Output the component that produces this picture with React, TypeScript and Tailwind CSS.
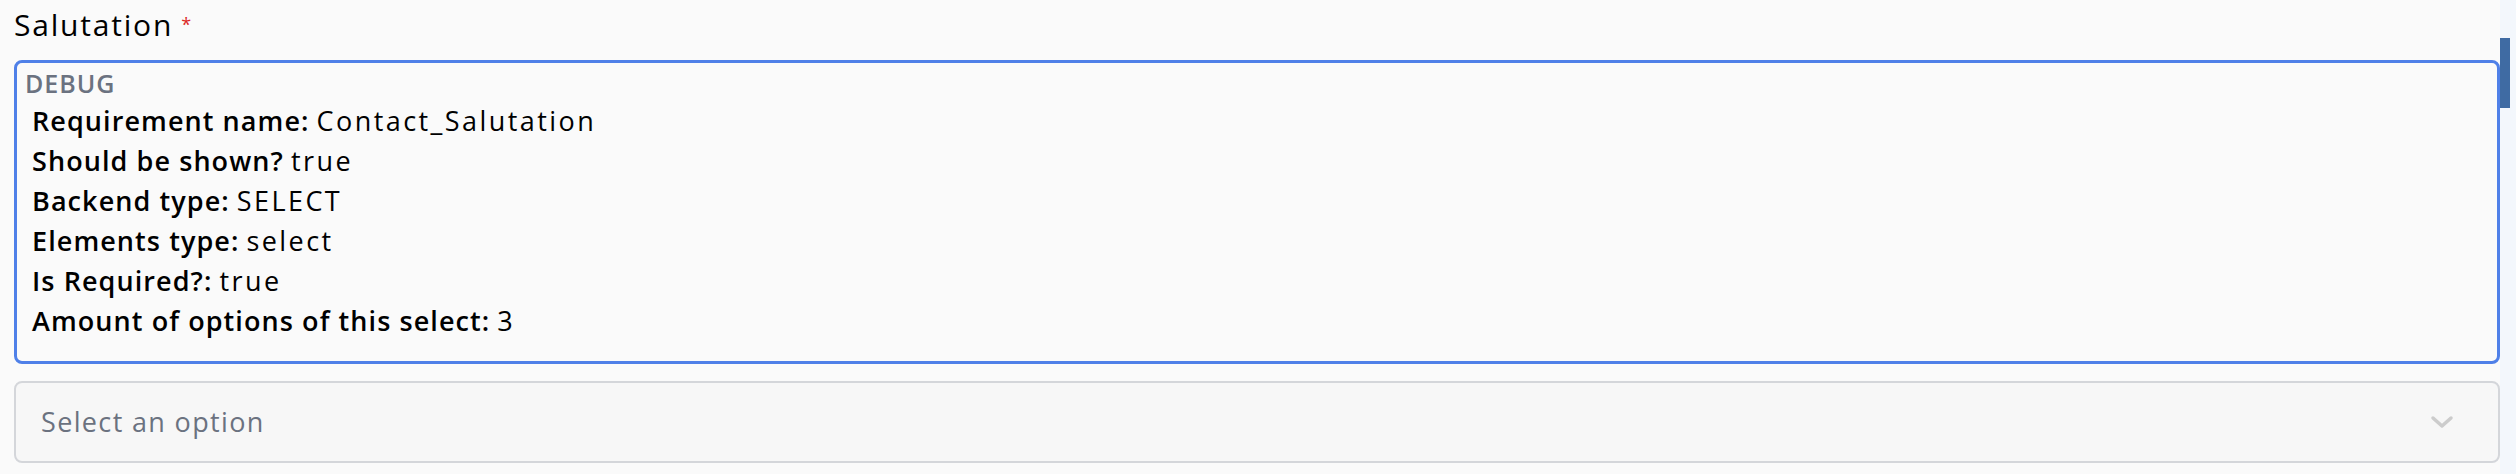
import React from "react";

const rows: { label: string; value: string }[] = [
  { label: "Requirement name:", value: "Contact_Salutation" },
  { label: "Should be shown?", value: "true" },
  { label: "Backend type:", value: "SELECT" },
  { label: "Elements type:", value: "select" },
  { label: "Is Required?:", value: "true" },
  { label: "Amount of options of this select:", value: "3" },
];

const App: React.FC = () => {
  return (
    <div
      className="flex h-[474px] w-full bg-[#fafafa] text-black"
      style={{ fontFamily: "'Open Sans', 'Liberation Sans', sans-serif" }}
    >
      <div className="flex-1 pl-[14px]">
        {/* Label */}
        <div className="flex h-[60px] items-start pt-[5px]">
          <span className="text-[30px] leading-[40px] tracking-[0.06em]">Salutation</span>
          <span className="ml-[8px] mt-[10px] text-[18px] leading-[18px] text-[#dc2626]">*</span>
        </div>

        {/* Debug panel */}
        <div className="h-[304px] rounded-[8px] border-[3px] border-[#4f80e8] pl-[15px] pt-[4px]">
          <div className="-ml-[7px] text-[25px] font-semibold leading-[32px] tracking-[0.04em] text-[#6b7280]">
            DEBUG
          </div>
          <div className="mt-[2px] flex flex-col">
            {rows.map((row) => (
              <div key={row.label} className="text-[27px] leading-[40px]">
                <span className="font-semibold tracking-[0.04em]">{row.label}</span>{" "}
                <span className="tracking-[0.09em]">{row.value}</span>
              </div>
            ))}
          </div>
        </div>

        {/* Select */}
        <div className="mt-[17px] flex h-[82px] items-center justify-between rounded-[8px] border-2 border-[#d4d6da] bg-[#f7f7f7] pl-[25px] pr-[44px]">
          <span className="text-[27px] tracking-[0.05em] text-[#6b7280]">Select an option</span>
          <svg width="24" height="14" viewBox="0 0 24 14" fill="none">
            <path d="M3 3l9 8 9-8" stroke="#cccccc" strokeWidth="3.5" strokeLinecap="round" strokeLinejoin="round" />
          </svg>
        </div>
      </div>

      {/* Scrollbar */}
      <div className="w-[16px] bg-[#f3f7fc]">
        <div className="mt-[38px] h-[70px] w-[10px] bg-[#3f6ba3]" />
      </div>
    </div>
  );
};

export default App;
